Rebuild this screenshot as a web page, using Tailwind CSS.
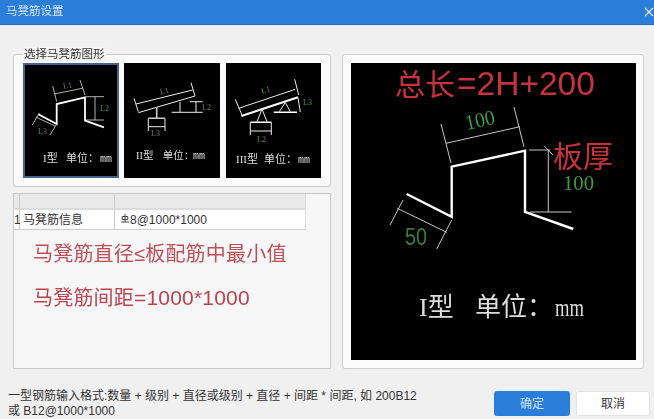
<!DOCTYPE html>
<html lang="zh-CN">
<head>
  <meta charset="UTF-8" />
  <title>马凳筋设置</title>
  <script src="https://cdn.jsdelivr.net/npm/@tailwindcss/browser@4"></script>
</head>
<body class="w-[654px] h-[419px] overflow-hidden bg-[#f0f0f0] text-[#222] font-['Liberation_Sans','Noto_Sans_CJK_SC',sans-serif] flex flex-col">
  <!-- Title bar -->
  <div class="h-[25px] shrink-0 bg-[#2b7dda] border-b border-[#2a6cb8] flex items-center justify-between pl-[6px]">
    <span class="text-[11.5px] text-[#d5e6f7] blur-[0.3px]">马凳筋设置</span>
    <svg class="w-[10px] h-[10px]" viewBox="0 0 10 10" fill="none" stroke="#e8f1fb" stroke-width="1.2"><path d="M1 1l8 8M9 1l-8 8" /></svg>
  </div>

  <!-- Main -->
  <div class="flex pt-[29px] pl-[13px] gap-[11px]">
    <div class="w-[318px] flex flex-col gap-[6px]">
      <!-- Shape picker -->
      <div class="relative h-[133px] bg-[#fbfbfb] border border-[#c9c9c9] rounded-[3px] pl-[9px] pt-[8px] flex gap-[5px]">
        <span class="absolute left-[9px] -top-[8px] px-[1px] bg-[#f4f4f4] text-[11.5px] leading-[14px] text-[#333] blur-[0.2px]">选择马凳筋图形</span>

        <div class="w-[96px] h-[115px] bg-black border-2 border-[#44648f]">
          <svg class="w-full h-full blur-[0.3px]" viewBox="25 65 92 111" fill="none">
            <g stroke="#fff" stroke-width="1.8"><path d="M38.3 114.3L56.7 124V104L85 97.3V120.5L104 127.3" /></g>
            <g stroke="#ddd" stroke-width="0.8"><path d="M54.3 94L82.3 88.3M52.7 86L56.7 101.7M80 80L85 95M86 96.7H104M95 96.7V120M86 120H104M35.7 117L55 126M32.3 125L39.3 113M50 135L57.3 123" /></g>
            <g fill="#5e8a5e" font-size="8" font-family="Liberation Serif"><text x="63" y="88" transform="rotate(-10 68 85)">L1</text><text x="100" y="111">L2</text><text x="38" y="134">L3</text></g>
            <text y="162" fill="#ddd" font-size="11" font-family="Liberation Serif, Noto Sans CJK SC"><tspan x="43">I型</tspan><tspan x="66">单位：</tspan><tspan x="100" font-size="10" font-family="Liberation Mono">mm</tspan></text>
          </svg>
        </div>

        <div class="w-[96px] h-[115px] bg-black">
          <svg class="w-full h-full blur-[0.3px]" viewBox="124 63 96 115" fill="none">
            <g stroke="#eee" stroke-width="1"><path d="M136 104L192.7 90M134 98.3L138.3 111.7M191 82.7L195 96M138.3 112.7L195 96M180 102V112M171.7 112.3H202.7M190 101.7H202.7M196 101.7V112.3M148.3 118.3V131M165 118.3V131M148.3 126.7H165" /></g>
            <path d="M156.7 107.3V118.3M148.3 118.3H165" stroke="#ccc" stroke-width="1.6" />
            <g fill="#5e8a5e" font-size="8" font-family="Liberation Serif"><text x="160" y="94" transform="rotate(-14 163 91)">L1</text><text x="202" y="110">L2</text><text x="151" y="136">L3</text></g>
            <text y="159" fill="#ddd" font-size="10.5" font-family="Liberation Serif, Noto Sans CJK SC"><tspan x="136">II型</tspan><tspan x="162.7">单位：</tspan><tspan x="193" font-size="10" font-family="Liberation Mono">mm</tspan></text>
          </svg>
        </div>

        <div class="w-[95px] h-[115px] bg-black ml-[1px]">
          <svg class="w-full h-full blur-[0.3px]" viewBox="226 63 95 115" fill="none">
            <path d="M241.3 116L298 97.3" stroke="#fff" stroke-width="2" />
            <g stroke="#eee" stroke-width="1"><path d="M238.7 108.3L295.3 89.3M235.3 99.3L242 115M294.7 79.3L298.7 95M262 109L257 121.7M262 109L267 121.7M250.3 122.3V135M271.3 122.3V135M250.3 131H271.3M285.3 102.3L279.3 111.7M285.3 102.3L290.3 111.7M298 98L300.3 112" /></g>
            <path d="M250.3 122.3H271.3M273.7 112.3H297" stroke="#fff" stroke-width="1.4" />
            <g fill="#5e8a5e" font-size="8" font-family="Liberation Serif"><text x="261" y="93" transform="rotate(-16 264 90)">L1</text><text x="257" y="142">L2</text><text x="303" y="105">L3</text></g>
            <text y="163" fill="#ddd" font-size="11" font-family="Liberation Serif, Noto Sans CJK SC"><tspan x="236">III型</tspan><tspan x="264">单位：</tspan><tspan x="298" font-size="10" font-family="Liberation Mono">mm</tspan></text>
          </svg>
        </div>
      </div>

      <!-- Rebar info table + notes -->
      <div class="h-[176px] bg-[#f7f7f7] border border-[#c9c9c9]">
        <div class="w-[292px] grid grid-cols-[6px_95px_191px] text-[12px] text-[#333]">
          <div class="h-[16px] bg-[#e9e9e9] border-b-2 border-[#dcdcdc] border-r border-r-[#ccc]"></div>
          <div class="h-[16px] bg-[#e9e9e9] border-b-2 border-[#dcdcdc] border-r border-r-[#ccc]"></div>
          <div class="h-[16px] bg-[#e9e9e9] border-b-2 border-[#dcdcdc] border-r border-r-[#ddd]"></div>
          <div class="h-[20px] bg-white border-b border-[#ccc] border-r border-r-[#ccc] flex items-center">1</div>
          <div class="h-[20px] bg-white border-b border-[#ccc] border-r border-r-[#ccc] flex items-center pl-[3px]">马凳筋信息</div>
          <div class="h-[20px] bg-white border-b border-[#ccc] border-r border-r-[#ddd] flex items-center pl-[6px] gap-[1px]">
            <svg class="w-[8px] h-[9px] -mt-[3px]" viewBox="0 0 8 9" fill="none" stroke="#333" stroke-width="0.9"><path d="M4 0V8M1.2 2.5H6.8V5.5H1.2ZM0 8H8" /></svg>
            <span>8@1000*1000</span>
          </div>
        </div>
        <p class="mt-[12px] ml-[19px] text-[20px] tracking-[0.2px] leading-[24px] text-[#bd4f58] blur-[0.4px]">马凳筋直径≤板配筋中最小值</p>
        <p class="mt-[20px] ml-[19px] text-[20px] tracking-[0.2px] leading-[24px] text-[#b9444e] blur-[0.4px]">马凳筋间距<span class="text-[21px]">=1000*1000</span></p>
      </div>
    </div>

    <!-- Large preview -->
    <div class="w-[302px] h-[315px] bg-[#fbfbfb] border border-[#cfcfcf] rounded-[3px] pl-[8px] pt-[8px]">
      <div class="w-[285px] h-[297px] bg-black">
        <svg class="w-full h-full blur-[0.3px]" viewBox="351 63 285 297" fill="none">
          <path d="M406.7 194L451.7 216.7V166.7L525 150.7V212L573.3 229" stroke="#fff" stroke-width="2.4" />
          <path d="M446 143.3L520 126.7M441 124L451 163M514 107L524 147M529 150H550M548.3 150V212M530 212H571.7M544 145.7L553 155M397.3 208.3L446.7 232.3M390 225L403 200M436.7 249L451.7 220" stroke="#ddd" stroke-width="0.9" />
          <text x="395" y="95" fill="#c8323f" font-size="30" font-family="Noto Sans CJK SC">总长</text>
          <text x="457" y="95" fill="#c8323f" font-size="33.5" font-family="Liberation Sans">=2H+200</text>
          <text x="553" y="167" fill="#c8323f" font-size="30" font-family="Noto Sans CJK SC">板厚</text>
          <text x="465" y="127" transform="rotate(-12 480 120)" fill="#3f9a4a" font-size="21" font-family="Liberation Serif" textLength="30" lengthAdjust="spacingAndGlyphs">100</text>
          <text x="563" y="190" fill="#3f9a4a" font-size="22" font-family="Liberation Serif" textLength="31" lengthAdjust="spacingAndGlyphs">100</text>
          <text x="405" y="245" fill="#3a7d3e" font-size="23" font-family="Liberation Sans" textLength="22" lengthAdjust="spacingAndGlyphs">50</text>
          <text y="316" fill="#ddd" font-size="26" font-family="Liberation Serif, Noto Sans CJK SC"><tspan x="419">I型</tspan><tspan x="475">单位：</tspan></text>
          <text x="555" y="316" fill="#ddd" font-size="26" font-family="Liberation Serif" textLength="29" lengthAdjust="spacingAndGlyphs">mm</text>
        </svg>
      </div>
    </div>
  </div>

  <!-- Footer -->
  <div class="flex-1 relative flex items-start justify-between pl-[8px] pr-[4px]">
    <p class="w-[440px] pt-[20px] text-[12px] leading-[15px] text-[#333]">一型钢筋输入格式:数量 + 级别 + 直径或级别 + 直径 + 间距 * 间距, 如 200B12<br />或 B12@1000*1000</p>
    <div class="flex gap-[6px] pt-[22px]">
      <button class="w-[76px] h-[25px] rounded-[3px] bg-[#2b7dda] text-[12px] text-[#cfe2f6]">确定</button>
      <button class="w-[74px] h-[25px] rounded-[3px] bg-white border border-[#e2e2e2] text-[12px] text-[#333]">取消</button>
    </div>
  </div>
</body>
</html>
